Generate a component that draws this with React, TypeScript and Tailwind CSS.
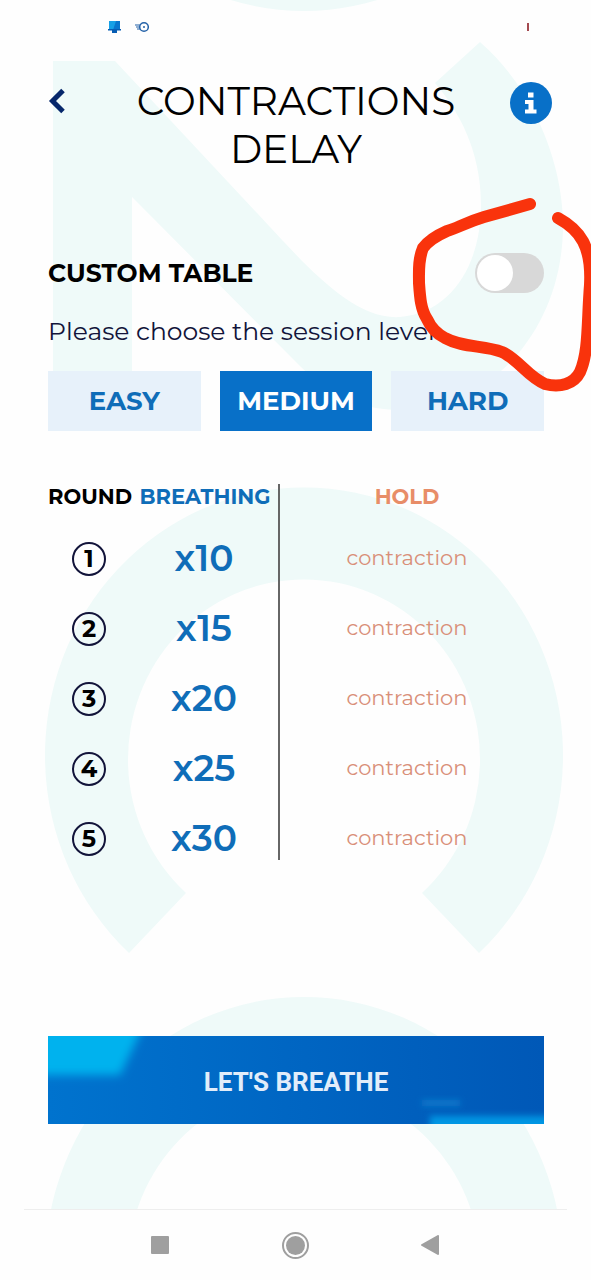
import { useState } from "react";

const levels = ["EASY", "MEDIUM", "HARD"];
const rounds = [10, 15, 20, 25, 30];

function Backdrop() {
  return (
    <svg aria-hidden="true" viewBox="0 0 591 1280" className="pointer-events-none absolute inset-x-0 top-0 -z-10 w-full" fill="#effaf9">
      <ellipse cx="304" cy="-259" rx="259" ry="270" />
      <path d="M53 61H115L270 227C310 270 355 320 400 317C455 312 481 260 481 205C481 150 458 110 435 83L480 42C535 90 563 165 563 225C563 330 490 410 400 410C355 410 325 390 300 366L132 197V371H53Z" />
      <path d="M129 953A259 268 0 1 1 479 953L422 893A176 180 0 1 0 186 893Z" />
      <path fillRule="evenodd" d="M45 1267A259 270 0 0 1 563 1267ZM128 1267A176 180 0 0 1 480 1267Z" />
    </svg>
  );
}

function Scribble() {
  return (
    <svg aria-hidden="true" viewBox="0 0 591 1280" className="pointer-events-none absolute inset-x-0 top-0 w-full" fill="none" stroke="#f9330c" strokeWidth="12" strokeLinecap="round" strokeLinejoin="round">
      <path d="M530 204L484 217C464 223 458 228 447 231C438 235 428 241 423 248C418 260 419 272 419 283C420 298 421 310 427 319C431 328 437 334 445 338C463 348 484 345 502 352C518 359 528 377 545 384C560 388 574 384 580 372C589 352 587 322 590 285C592 246 580 230 558 218" />
    </svg>
  );
}

export default function App() {
  const [level, setLevel] = useState("MEDIUM");
  const [custom, setCustom] = useState(false);
  return (
    <div className="relative isolate flex min-h-screen flex-col overflow-hidden bg-[#fefefe] font-['Montserrat','Inter',sans-serif] text-black">
      <Backdrop />
      <div className="flex h-[53px] items-center pr-[62px] pl-[108px]">
        <svg aria-hidden="true" viewBox="0 0 14 14" className="size-[14px]">
          <path d="M1 1h11v9H1z" fill="#16a0e6" />
          <path d="M8 1h4v9H5z" fill="#0876ce" />
          <path d="M0 9h13v1.500H0zM4 10h5v3H4z" fill="#075db3" />
        </svg>
        <svg aria-hidden="true" viewBox="0 0 14 12" className="ml-[13px] h-[12px] w-[14px]" fill="none" stroke="#2563a8" strokeWidth="1.500">
          <circle cx="9" cy="6" r="4.300" />
          <path d="M0 4h5M1 6h4M2 8h3" strokeWidth="1" />
          <circle cx="9" cy="6" r="1" fill="#2563a8" stroke="none" />
        </svg>
        <span className="ml-auto h-2 w-[2px] bg-[#a44a50]" />
      </div>

      <header className="flex items-start justify-between pt-6 pr-[39px] pl-12">
        <button aria-label="Back" className="mt-[11px] h-[26px] w-[34px]">
          <svg viewBox="0 0 18 26" className="h-[26px] w-[18px]" fill="none" stroke="#06276b" strokeWidth="5">
            <path d="M15 2.500L4.500 13L15 23.500" />
          </svg>
        </button>
        <h1 className="text-center text-[39px] leading-[48px] font-normal">
          CONTRACTIONS
          <br />
          DELAY
        </h1>
        <button aria-label="Information" className="mt-[5px] size-[42px]">
          <svg viewBox="0 0 42 42" className="size-[42px]">
            <circle cx="21" cy="21" r="21" fill="#0870c8" />
            <path d="M18 10.500h5.500v5H18zM15 18h8.500v9.500H26.500v4H15v-4h3.500V22H15z" fill="#fff" />
          </svg>
        </button>
      </header>

      <main className="pr-[47px] pl-12">
        <div className="mt-20 flex h-10 items-center justify-between">
          <label htmlFor="custom" className="text-[25px] leading-8 font-bold">CUSTOM TABLE</label>
          <input
            id="custom"
            type="checkbox"
            role="switch"
            checked={custom}
            onChange={(e) => setCustom(e.target.checked)}
            className="h-10 w-[69px] appearance-none rounded-full bg-[#d8d8d8] p-[2px] before:block before:size-9 before:rounded-full before:bg-white checked:bg-[#0870c8] checked:before:ml-[29px]"
          />
        </div>
        <p className="mt-[22px] text-[25px] leading-8 text-[#12143a]">Please choose the session level</p>
        <div className="mt-6 grid grid-cols-3 gap-[19px]">
          {levels.map((name) => (
            <button
              key={name}
              aria-pressed={level === name}
              onClick={() => setLevel(name)}
              className={`h-[60px] text-[26px] leading-8 font-bold ${level === name ? "bg-[#0870c8] text-white" : "bg-[#e7f1fa] text-[#0f6db8]"}`}
            >
              {name}
            </button>
          ))}
        </div>

        <table className="mt-[53px] w-full table-fixed border-collapse text-center">
          <colgroup>
            <col className="w-[82px]" />
            <col className="w-[149px]" />
            <col />
          </colgroup>
          <thead>
            <tr className="h-[54px] text-[21px] leading-[26px]">
              <th className="p-0 text-left align-top font-bold whitespace-nowrap">ROUND</th>
              <th className="border-r-2 border-[#666] p-0 pl-[2px] align-top font-bold text-[#0f6db8]">BREATHING</th>
              <th className="p-0 pr-[10px] align-top font-bold text-[#e88d68]">HOLD</th>
            </tr>
          </thead>
          <tbody>
            {rounds.map((count, i) => (
              <tr key={count} className="h-[70px] align-top last:h-[42px]">
                <td className="p-0 pt-1">
                  <span className="mx-auto flex size-[34px] items-center justify-center rounded-full border-2 border-[#12143a] text-[24px] leading-7 font-bold">{i + 1}</span>
                </td>
                <td className="border-r-2 border-[#666] p-0 text-[36px] leading-10 font-semibold text-[#0f6db8]">x{count}</td>
                <td className="p-0 pt-[6px] pr-[10px] text-[21px] leading-7 text-[#d98f78]">contraction</td>
              </tr>
            ))}
          </tbody>
        </table>
      </main>

      <div className="mt-auto pr-[47px] pb-[85px] pl-12">
        <button className="relative isolate h-[88px] w-full overflow-hidden bg-linear-to-r from-[#0073ce] to-[#0058b7] pt-1 font-['Roboto',sans-serif] text-[26px] leading-8 font-bold text-[#e1edfa]">
          <svg aria-hidden="true" viewBox="0 0 496 88" preserveAspectRatio="none" className="absolute inset-0 -z-10 size-full">
            <defs>
              <filter id="soft" x="-20%" y="-50%" width="140%" height="200%">
                <feGaussianBlur stdDeviation="5" />
              </filter>
              <filter id="glow" x="-20%" y="-80%" width="140%" height="260%">
                <feGaussianBlur stdDeviation="3" />
              </filter>
            </defs>
            <path d="M-30 -30H105L72 39H-30Z" fill="#00b2ee" filter="url(#soft)" />
            <path d="M382 80H530V110H382Z" fill="#0096e4" filter="url(#glow)" />
            <path d="M374 64H412V70H374Z" fill="#087acc" filter="url(#glow)" />
          </svg>
          LET'S BREATHE
        </button>
      </div>

      <nav className="mx-6 flex h-[71px] items-center justify-between border-t border-[#eee] bg-[#fefefe] pr-[128px] pl-[127px]">
        <button aria-label="Recent apps" className="size-[18px] rounded-[1px] bg-[#9f9f9f]" />
        <button aria-label="Home" className="flex size-[27px] items-center justify-center rounded-full border-2 border-[#9f9f9f]">
          <span className="size-[19px] rounded-full bg-[#9f9f9f]" />
        </button>
        <button aria-label="Go back">
          <svg viewBox="0 0 18 20" className="h-5 w-[18px]" fill="#9f9f9f" stroke="#9f9f9f" strokeLinejoin="round" strokeWidth="2">
            <path d="M17 1v18L1 10z" />
          </svg>
        </button>
      </nav>
      <Scribble />
    </div>
  );
}
